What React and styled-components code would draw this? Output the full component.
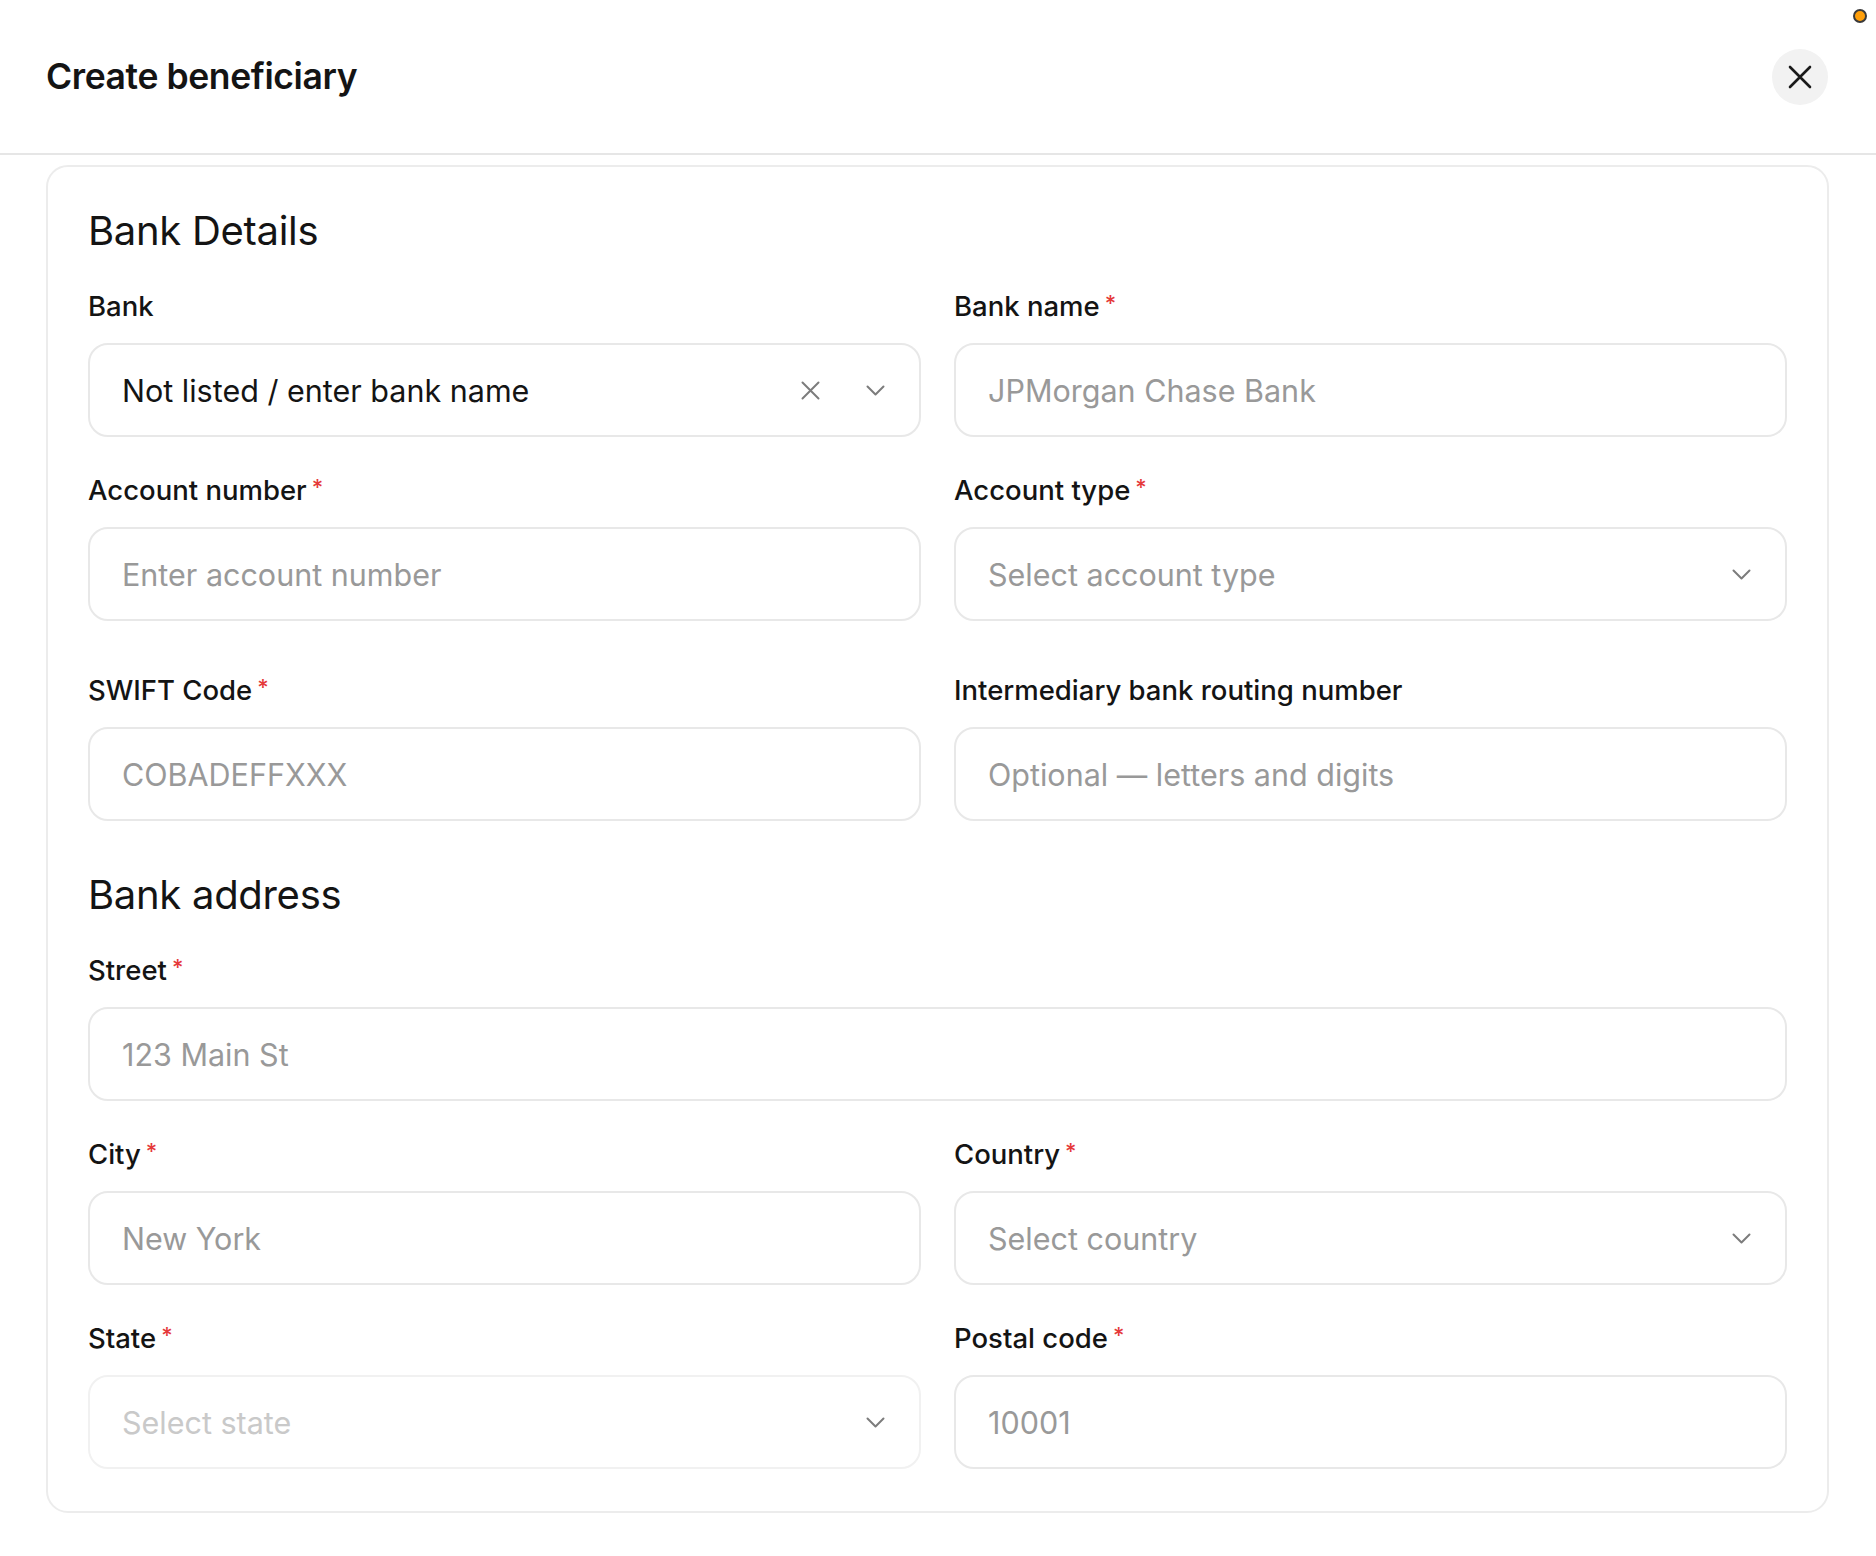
import styled, { createGlobalStyle } from 'styled-components'

const GlobalStyle = createGlobalStyle`
  * {
    box-sizing: border-box;
  }
  body {
    margin: 0;
    background: #ffffff;
    color: #141414;
    font-family: Inter, 'Noto Sans', sans-serif;
  }
`

const Page = styled.div`
  position: relative;
  min-height: 1556px;
  background: #ffffff;
`

const StatusDot = styled.span`
  position: absolute;
  top: 9px;
  right: 9px;
  width: 14px;
  height: 14px;
  border-radius: 50%;
  background: #ff9f0a;
  border: 2px solid #3a3a3a;
`

const Header = styled.header`
  height: 155px;
  display: flex;
  align-items: center;
  justify-content: space-between;
  padding: 0 48px 0 46px;
  border-bottom: 2px solid #e6e6e6;
`

const Title = styled.h1`
  margin: 0;
  font-size: 35.5px;
  font-weight: 600;
  letter-spacing: -0.4px;
  color: #141414;
`

const CloseButton = styled.button`
  width: 56px;
  height: 56px;
  border: none;
  border-radius: 50%;
  background: #f2f2f2;
  display: flex;
  align-items: center;
  justify-content: center;
  padding: 0;
  cursor: pointer;
`

const Card = styled.section`
  margin: 10px 47px 0 46px;
  border: 2px solid #ececec;
  border-radius: 22px;
  padding: 44px 40px 42px;
`

const SectionTitle = styled.h2`
  margin: 0 0 39px;
  font-size: 40px;
  line-height: 40px;
  font-weight: 400;
  letter-spacing: -0.3px;
  color: #141414;
`

const Grid = styled.div`
  display: grid;
  grid-template-columns: 1fr 1fr;
  column-gap: 33px;
  row-gap: 37px;
  margin-bottom: ${(p) => (p.$last ? '0' : '54px')};
`

const Field = styled.div`
  display: flex;
  flex-direction: column;
  min-width: 0;
  grid-column: ${(p) => (p.$wide ? '1 / -1' : 'auto')};
  margin-top: ${(p) => (p.$spaced ? '16px' : '0')};
`

const Label = styled.label`
  display: flex;
  align-items: flex-start;
  height: 32px;
  margin-bottom: 21px;
  font-size: 27.5px;
  line-height: 32px;
  font-weight: 500;
  color: #141414;
`

const Required = styled.span`
  margin-left: 5px;
  font-size: 22px;
  line-height: 26px;
  font-weight: 500;
  color: #e5393a;
`

const TextInput = styled.input`
  width: 100%;
  height: 94px;
  padding: 0 32px;
  border: 2px solid #e8e8e8;
  border-radius: 20px;
  background: #ffffff;
  font-family: Inter, 'Noto Sans', sans-serif;
  font-size: 30.5px;
  color: #141414;
  outline: none;

  &::placeholder {
    color: #999999;
  }
`

const SelectBox = styled.div`
  height: 94px;
  display: flex;
  align-items: center;
  gap: 20px;
  padding: 0 34px 0 32px;
  border: 2px solid ${(p) => (p.$disabled ? '#f1f1f1' : '#e8e8e8')};
  border-radius: 20px;
  background: #ffffff;
`

const SelectValue = styled.span`
  flex: 1;
  font-size: 30.5px;
  color: ${(p) => (p.$placeholder ? (p.$disabled ? '#c9c9c9' : '#999999') : '#141414')};
  white-space: nowrap;
  overflow: hidden;
`

const IconSlot = styled.span`
  display: flex;
  align-items: center;
  justify-content: center;
  width: 19px;
  margin-left: ${(p) => p.$gap || 0}px;
`

const CloseIcon = () => (
  <svg width="24" height="24" viewBox="0 0 24 24" fill="none">
    <path d="M2 2L22 22M22 2L2 22" stroke="#1a1a1a" strokeWidth="2.6" strokeLinecap="round" />
  </svg>
)

const ClearIcon = () => (
  <svg width="19" height="19" viewBox="0 0 19 19" fill="none">
    <path d="M1.5 1.5L17.5 17.5M17.5 1.5L1.5 17.5" stroke="#7c7c7c" strokeWidth="2" strokeLinecap="round" />
  </svg>
)

const Chevron = () => (
  <svg width="19" height="11" viewBox="0 0 19 11" fill="none">
    <path d="M1.5 1.5L9.5 9.5L17.5 1.5" stroke="#7c7c7c" strokeWidth="2" strokeLinecap="round" strokeLinejoin="round" />
  </svg>
)

const FieldLabel = ({ children, required }) => (
  <Label>
    {children}
    {required && <Required>*</Required>}
  </Label>
)

const Select = ({ value, placeholder, clearable, disabled }) => (
  <SelectBox $disabled={disabled}>
    <SelectValue $placeholder={!value} $disabled={disabled}>
      {value || placeholder}
    </SelectValue>
    {clearable && (
      <IconSlot>
        <ClearIcon />
      </IconSlot>
    )}
    <IconSlot $gap={clearable ? 26 : 0}>
      <Chevron />
    </IconSlot>
  </SelectBox>
)

export default function App() {
  return (
    <Page>
      <GlobalStyle />
      <StatusDot />
      <Header>
        <Title>Create beneficiary</Title>
        <CloseButton aria-label="Close">
          <CloseIcon />
        </CloseButton>
      </Header>

      <Card>
        <SectionTitle>Bank Details</SectionTitle>
        <Grid>
          <Field>
            <FieldLabel>Bank</FieldLabel>
            <Select value="Not listed / enter bank name" clearable />
          </Field>
          <Field>
            <FieldLabel required>Bank name</FieldLabel>
            <TextInput readOnly placeholder="JPMorgan Chase Bank" />
          </Field>
          <Field>
            <FieldLabel required>Account number</FieldLabel>
            <TextInput readOnly placeholder="Enter account number" />
          </Field>
          <Field>
            <FieldLabel required>Account type</FieldLabel>
            <Select placeholder="Select account type" />
          </Field>
          <Field $spaced>
            <FieldLabel required>SWIFT Code</FieldLabel>
            <TextInput readOnly placeholder="COBADEFFXXX" />
          </Field>
          <Field $spaced>
            <FieldLabel>Intermediary bank routing number</FieldLabel>
            <TextInput readOnly placeholder="Optional — letters and digits" />
          </Field>
        </Grid>

        <SectionTitle>Bank address</SectionTitle>
        <Grid $last>
          <Field $wide>
            <FieldLabel required>Street</FieldLabel>
            <TextInput readOnly placeholder="123 Main St" />
          </Field>
          <Field>
            <FieldLabel required>City</FieldLabel>
            <TextInput readOnly placeholder="New York" />
          </Field>
          <Field>
            <FieldLabel required>Country</FieldLabel>
            <Select placeholder="Select country" />
          </Field>
          <Field>
            <FieldLabel required>State</FieldLabel>
            <Select placeholder="Select state" disabled />
          </Field>
          <Field>
            <FieldLabel required>Postal code</FieldLabel>
            <TextInput readOnly placeholder="10001" />
          </Field>
        </Grid>
      </Card>
    </Page>
  )
}
